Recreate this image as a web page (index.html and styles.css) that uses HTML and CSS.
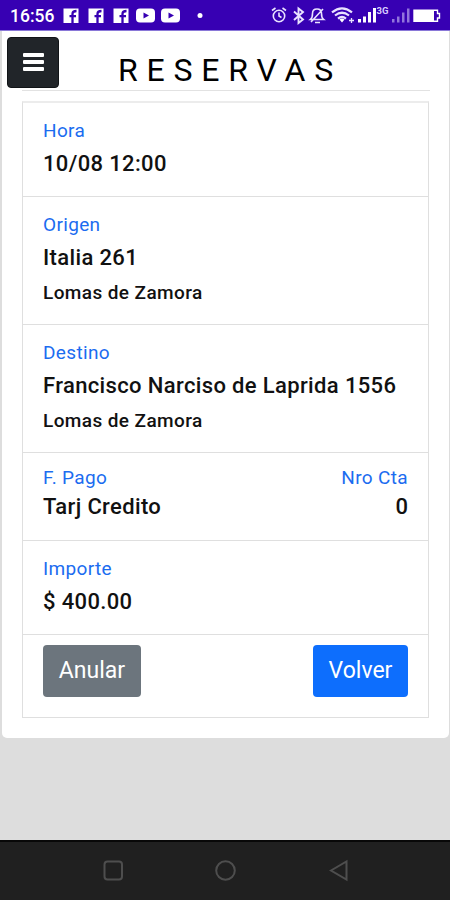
FILE: index.html
```html
<!DOCTYPE html>
<html lang="es">
<head>
<meta charset="utf-8">
<title>Reservas</title>
<link rel="stylesheet" href="styles.css">
</head>
<body>
<div class="status">
  <span class="clock">16:56</span>
  <svg class="notices" width="145" height="30" viewBox="62 0 145 30">
    <g fill="#fff"><rect x="63.500" y="8.500" width="15" height="14.500"/><rect x="88.500" y="8.500" width="15" height="14.500"/><rect x="113.500" y="8.500" width="15" height="14.500"/><rect x="136" y="8.500" width="19" height="14" rx="4"/><rect x="161" y="8.500" width="19" height="14" rx="4"/><circle cx="200" cy="15.500" r="2.500"/></g>
    <g fill="none" stroke="#3700b3" stroke-width="2.300"><path d="M72.500 23V14q0-3 4-3M69.500 16.200h6.500M97.500 23V14q0-3 4-3M94.500 16.200h6.500M122.500 23V14q0-3 4-3M119.500 16.200h6.500"/></g>
    <path d="M143.500 12.500v6l5.500-3zM168.500 12.500v6l5.500-3z" fill="#3700b3"/>
  </svg>
  <svg class="signals" width="180" height="30" viewBox="270 0 180 30">
    <g fill="none" stroke="#e9e2ff" stroke-width="1.600">
      <circle cx="279" cy="16" r="5.700"/><path d="M279 12.500V16l2.500 1.500M272 10.500l3.500-2.500M286 10.500L282.500 8"/>
      <path d="M294 11.500l9 8-4.500 3.500V8.500l4.500 3.500-9 8" stroke-width="1.900"/>
      <path d="M310.500 19.500q2-1.500 2-6 0-4.500 4.500-4.500t4.500 4.500q0 4.500 2 6zM315 22.500h5M311 22L323 9"/>
      <path d="M332 12.300q10-8 20 0M335 15.500q7-5.500 14 0M338 18.600q4-3.200 8 0" stroke-width="2.200"/>
      <path d="M349 20.500h5M351.500 18v5" stroke-width="1.300"/>
    </g>
    <path d="M339.500 19.500q2.500-2 5 0L342 22.500z" fill="#fff"/>
    <path d="M358 19h3v3.500h-3zM363 16.500h3v6h-3zM368 12h3v10.500h-3zM373 8h3v14.500h-3z" fill="#fff"/>
    <text class="net" x="376.500" y="13.500">3G</text>
    <path d="M392 19h2.500v3.500H392zM397 16.500h2.500v6H397zM402 12.500h2.500v10H402zM407 8.500h2.500v14H407z" fill="#9274dc"/>
    <path d="M414 10h20v11.500h-20z" fill="#fff"/><path d="M414 10.200h23.500v3.300h2v4.500h-2v3.300H414z" fill="none" stroke="#fff" stroke-width="1.400"/>
  </svg>
</div>
<main class="page">
  <section class="sheet">
    <header class="head">
      <button class="menu" aria-label="Menú"><i></i><i></i><i></i></button>
      <h1>RESERVAS</h1>
    </header>
    <div class="ticket">
      <div class="row time"><p class="label">Hora</p><p class="value date">10/08 12:00</p></div>
      <div class="row place"><p class="label">Origen</p><p class="value">Italia 261</p><p class="city">Lomas de Zamora</p></div>
      <div class="row place"><p class="label">Destino</p><p class="value">Francisco Narciso de Laprida 1556</p><p class="city">Lomas de Zamora</p></div>
      <div class="row payment">
        <div><p class="label">F. Pago</p><p class="value">Tarj Credito</p></div>
        <div class="account"><p class="label">Nro Cta</p><p class="value">0</p></div>
      </div>
      <div class="row amount"><p class="label">Importe</p><p class="value">$ 400.00</p></div>
      <div class="row actions"><button class="btn cancel">Anular</button><button class="btn back">Volver</button></div>
    </div>
  </section>
</main>
<nav class="nav">
  <svg width="450" height="56" viewBox="0 0 450 56" fill="none" stroke="#4e4e4e" stroke-width="2">
    <rect x="104.500" y="19.500" width="17.500" height="18" rx="3"/>
    <circle cx="225.500" cy="28.500" r="9.300"/>
    <path d="M331 28.500l15.500-9v18z"/>
  </svg>
</nav>
</body>
</html>
```
FILE: styles.css
```css
* { box-sizing: border-box; }
body {
  margin: 0;
  width: 450px;
  height: 900px;
  overflow: hidden;
  display: flex;
  flex-direction: column;
  background: #ddd;
  color: #111;
  font-family: Roboto, sans-serif;
}
p, h1 { margin: 0; white-space: nowrap; }
button { border: 0; font-family: inherit; }
.status {
  height: 31px;
  flex: none;
  display: flex;
  background: #3700b3;
  border-bottom: 1px solid #8a78d8;
  color: #fff;
}
.clock { width: 62px; padding-left: 10px; font-size: 17.500px; line-height: 32px; font-weight: 500; }
.signals { margin-left: auto; }
.net { font-size: 9.500px; font-weight: 700; fill: #d9ccff; }
.page { flex: 1; padding: 0 1px 0 2px; }
.sheet {
  height: 707px;
  padding: 0 19px 0 20px;
  background: #fff;
  border-radius: 0 0 5px 5px;
}
.head {
  height: 60px;
  display: flex;
  border-bottom: 1px solid #e2e2e2;
}
.menu {
  flex: none;
  width: 52px;
  height: 51px;
  margin: 6px 0 0 -15px;
  padding: 0 0 2px;
  display: flex;
  flex-direction: column;
  align-items: center;
  justify-content: center;
  gap: 3px;
  background: #212529;
  border: 1px solid #111417;
  border-radius: 4px;
}
.menu i { width: 21px; height: 4px; border-radius: 1px; background: #fff; }
h1 {
  padding-left: 59px;
  font-size: 32px;
  line-height: 38px;
  margin-top: 20px;
  font-weight: 400;
  letter-spacing: 8.800px;
  color: #000;
}
.ticket {
  width: 407px;
  margin-top: 10px;
  border: 1px solid #dfdfdf;
  border-top: 2px solid #ececec;
}
.row { padding: 14px 20px 0; border-bottom: 1px solid #dfdfdf; }
.label { color: #1b6cf0; font-size: 19px; line-height: 28px; letter-spacing: .35px; }
.value { font-size: 22px; line-height: 38px; font-weight: 500; letter-spacing: .36px; }
.city { font-size: 19px; line-height: 32px; font-weight: 500; letter-spacing: .4px; }
.time { height: 94px; }
.place { height: 128px; }
.payment { height: 88px; padding-top: 11px; display: flex; justify-content: space-between; }
.payment .value { line-height: 30px; }
.account { text-align: right; }
.account .value { letter-spacing: 0; }
.amount { height: 94px; padding-top: 14px; }
.actions { height: 82px; padding-top: 10px; display: flex; justify-content: space-between; border-bottom: 0; }
.btn { height: 52px; padding: 0; border-radius: 4px; color: #fff; font-size: 23px; line-height: 50px; }
.cancel { width: 98px; background: #6c757d; }
.back { width: 95px; background: #0d6efd; }
.nav { height: 60px; flex: none; background: #202020; border-top: 2px solid #080808; }
```
